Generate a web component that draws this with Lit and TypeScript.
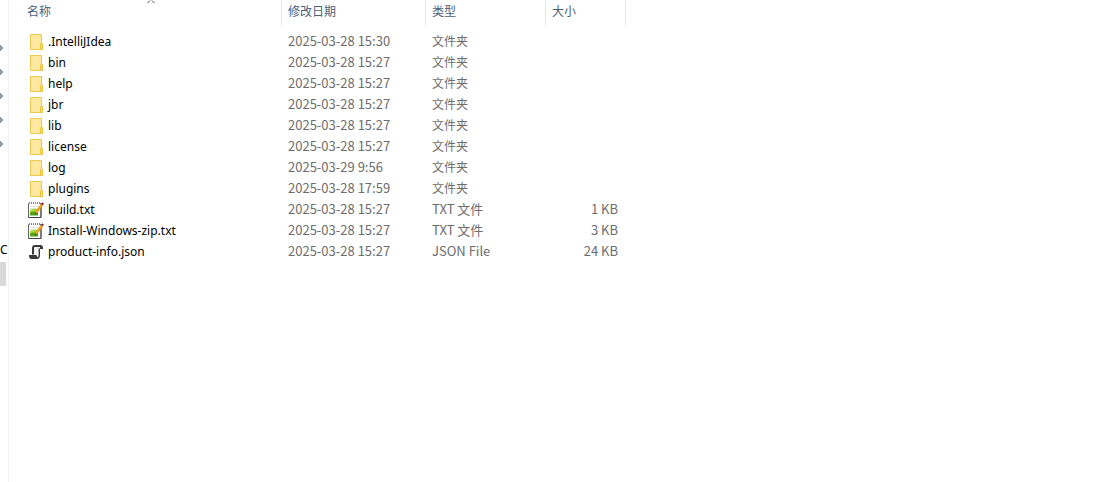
import { LitElement, html, css, svg } from "lit";
import { customElement, state } from "lit/decorators.js";

type Kind = "folder" | "text" | "script";

interface Entry {
  name: string;
  date: string;
  type: string;
  size: string;
  kind: Kind;
}

const folder = (name: string, date: string): Entry => ({ name, date, type: "文件夹", size: "", kind: "folder" });

const icons = {
  folder: svg`
    <path d="M2.5.5h11v15h-11z" fill="#ffe699" stroke="#ecc94f"/>
    <path d="M3 1h7v14H3z" fill="#ffe8a2"/>
    <path d="M12.5 15.5V10l1-.5h1v6z" fill="#ffe07a" stroke="#e8c23f"/>`,
  text: svg`
    <path d="M.5 1.5h12.5v14H.5z" fill="#fff" stroke="#666"/>
    <path d="M1 1.5h11" stroke="#fff"/>
    <path d="M1.5 0v2M3.5 0v2M5.5 0v2M7.5 0v2M9.5 0v2M11.5 0v2" stroke="#888"/>
    <path d="M2 4.5h8M2 6.5h6" stroke="#dde5da"/>
    <path d="M2 8q4-2 8-1v6H2z" fill="#a6dc3c"/>
    <path d="M2 10.5q4-1.5 8-.5v3.5H2z" fill="#4ea316"/>
    <path d="M13 5v10.5H.5" fill="none" stroke="#444"/>
    <path d="M7.4 9.6L13 2l1.9 1.3-5.5 7.5-2.4 1.3z" fill="#f4a51c" stroke="#c07a1a" stroke-width=".4"/>
    <path d="M13 2L14.2.3l1.7 1.2-1.1 1.8z" fill="#7d1f2b"/>
    <path d="M6.8 12.5l.5-2 1.4 1.1z" fill="#333"/>`,
  script: svg`
    <path d="M5 11V3.5Q5 2 6.5 2H12v9z" fill="#f3f3f3"/>
    <path d="M5 10.5V4Q5 2 7 2h5.5" fill="none" stroke="#3a3a3a" stroke-width="2"/>
    <path d="M11.5 1h1.3Q15 1 15 3.6V5h-3V3z" fill="#3a3a3a"/>
    <path d="M11.3 4.5v7" stroke="#3a3a3a" stroke-width="1.4"/>
    <path d="M1 11h7.5q.2 2 1.2 2t1-2H12q0 4-3 4H3.6Q1 15 1 12z" fill="#3a3a3a"/>`,
};

@customElement("app-root")
export class AppRoot extends LitElement {
  static styles = css`
    :host {
      display: flex;
      min-height: 100vh;
      background: #fff;
      color: #6d6d6d;
      font: 12px/20px "Noto Sans", "Noto Sans CJK SC", sans-serif;
    }
    .side {
      flex: none;
      width: 8px;
      overflow: hidden;
      border-right: 1px solid #f3f3f3;
      padding-top: 36px;
    }
    .pins {
      list-style: none;
      margin: 0;
      padding: 0;
    }
    .pin {
      display: flex;
      align-items: center;
      height: 24px;
    }
    .drives {
      margin-top: 82px;
      color: #000;
    }
    .drive {
      height: 24px;
      line-height: 24px;
    }
    .chosen {
      width: 6px;
      height: 24px;
      background: #d9d9d9;
    }
    .main {
      flex: 1;
      min-width: 0;
      padding-left: 12px;
    }
    .files {
      table-layout: fixed;
      border-collapse: separate;
      border-spacing: 0;
      width: 605px;
    }
    .c-name { width: 261px; }
    .c-date { width: 144px; }
    .c-type { width: 120px; }
    .c-size { width: 80px; }
    th {
      position: relative;
      box-sizing: border-box;
      height: 25px;
      padding: 0 6px 2px;
      border-right: 1px solid #e5e5e5;
      color: #4c607a;
      font-weight: 400;
      text-align: left;
    }
    .sort {
      position: absolute;
      top: 0;
      left: 50%;
      display: block;
      transform: translateX(-50%);
    }
    .gap td {
      height: 6px;
      padding: 0;
    }
    td {
      box-sizing: border-box;
      height: 21px;
      padding: 0 6px;
      white-space: nowrap;
    }
    .date, .type, .size {
      padding-bottom: 2px;
      font: 13px/18px "Noto Sans CJK SC", sans-serif;
    }
    .type:lang(zh) { font-size: 12px; }
    .size {
      padding-right: 8px;
      text-align: right;
    }
    .name {
      display: flex;
      align-items: center;
      gap: 4px;
      padding-left: 1px;
      color: #000;
    }
    .icon {
      flex: none;
      width: 16px;
      height: 16px;
    }
  `;

  @state() private entries: Entry[] = [
    folder(".IntelliJIdea", "2025-03-28 15:30"),
    folder("bin", "2025-03-28 15:27"),
    folder("help", "2025-03-28 15:27"),
    folder("jbr", "2025-03-28 15:27"),
    folder("lib", "2025-03-28 15:27"),
    folder("license", "2025-03-28 15:27"),
    folder("log", "2025-03-29 9:56"),
    folder("plugins", "2025-03-28 17:59"),
    { name: "build.txt", date: "2025-03-28 15:27", type: "TXT 文件", size: "1 KB", kind: "text" },
    { name: "Install-Windows-zip.txt", date: "2025-03-28 15:27", type: "TXT 文件", size: "3 KB", kind: "text" },
    { name: "product-info.json", date: "2025-03-28 15:27", type: "JSON File", size: "24 KB", kind: "script" },
  ];

  render() {
    return html`
      <nav class="side">
        <ul class="pins">
          ${[0, 1, 2, 3, 4].map(
            () => html`<li class="pin">
              <svg width="4" height="8" viewBox="0 0 4 8" aria-hidden="true">
                <path d="M0 1h1v1h1v1h1v2H2v1H1v1H0z" fill="#8e99a3" />
              </svg>
            </li>`
          )}
        </ul>
        <div class="drives">
          <div class="drive">C</div>
          <div class="chosen"></div>
        </div>
      </nav>
      <main class="main">
        <table class="files">
          <colgroup>
            <col class="c-name" /><col class="c-date" /><col class="c-type" /><col class="c-size" />
          </colgroup>
          <thead>
            <tr>
              <th scope="col" aria-sort="ascending">
                名称
                <svg class="sort" width="8" height="3" viewBox="0 0 8 3" aria-hidden="true">
                  <path d="M.5 3L3 .5M7.5 3L5 .5" fill="none" stroke="#555" />
                </svg>
              </th>
              <th scope="col">修改日期</th>
              <th scope="col">类型</th>
              <th scope="col">大小</th>
            </tr>
          </thead>
          <tbody>
            <tr class="gap"><td colspan="4"></td></tr>
            ${this.entries.map(
              (e) => html`<tr>
                <td>
                  <div class="name">
                    <svg class="icon" viewBox="0 0 16 16" aria-hidden="true">${icons[e.kind]}</svg>
                    <span>${e.name}</span>
                  </div>
                </td>
                <td class="date">${e.date}</td>
                <td class="type" lang=${e.kind === "folder" ? "zh" : "en"}>${e.type}</td>
                <td class="size">${e.size}</td>
              </tr>`
            )}
          </tbody>
        </table>
      </main>
    `;
  }
}
